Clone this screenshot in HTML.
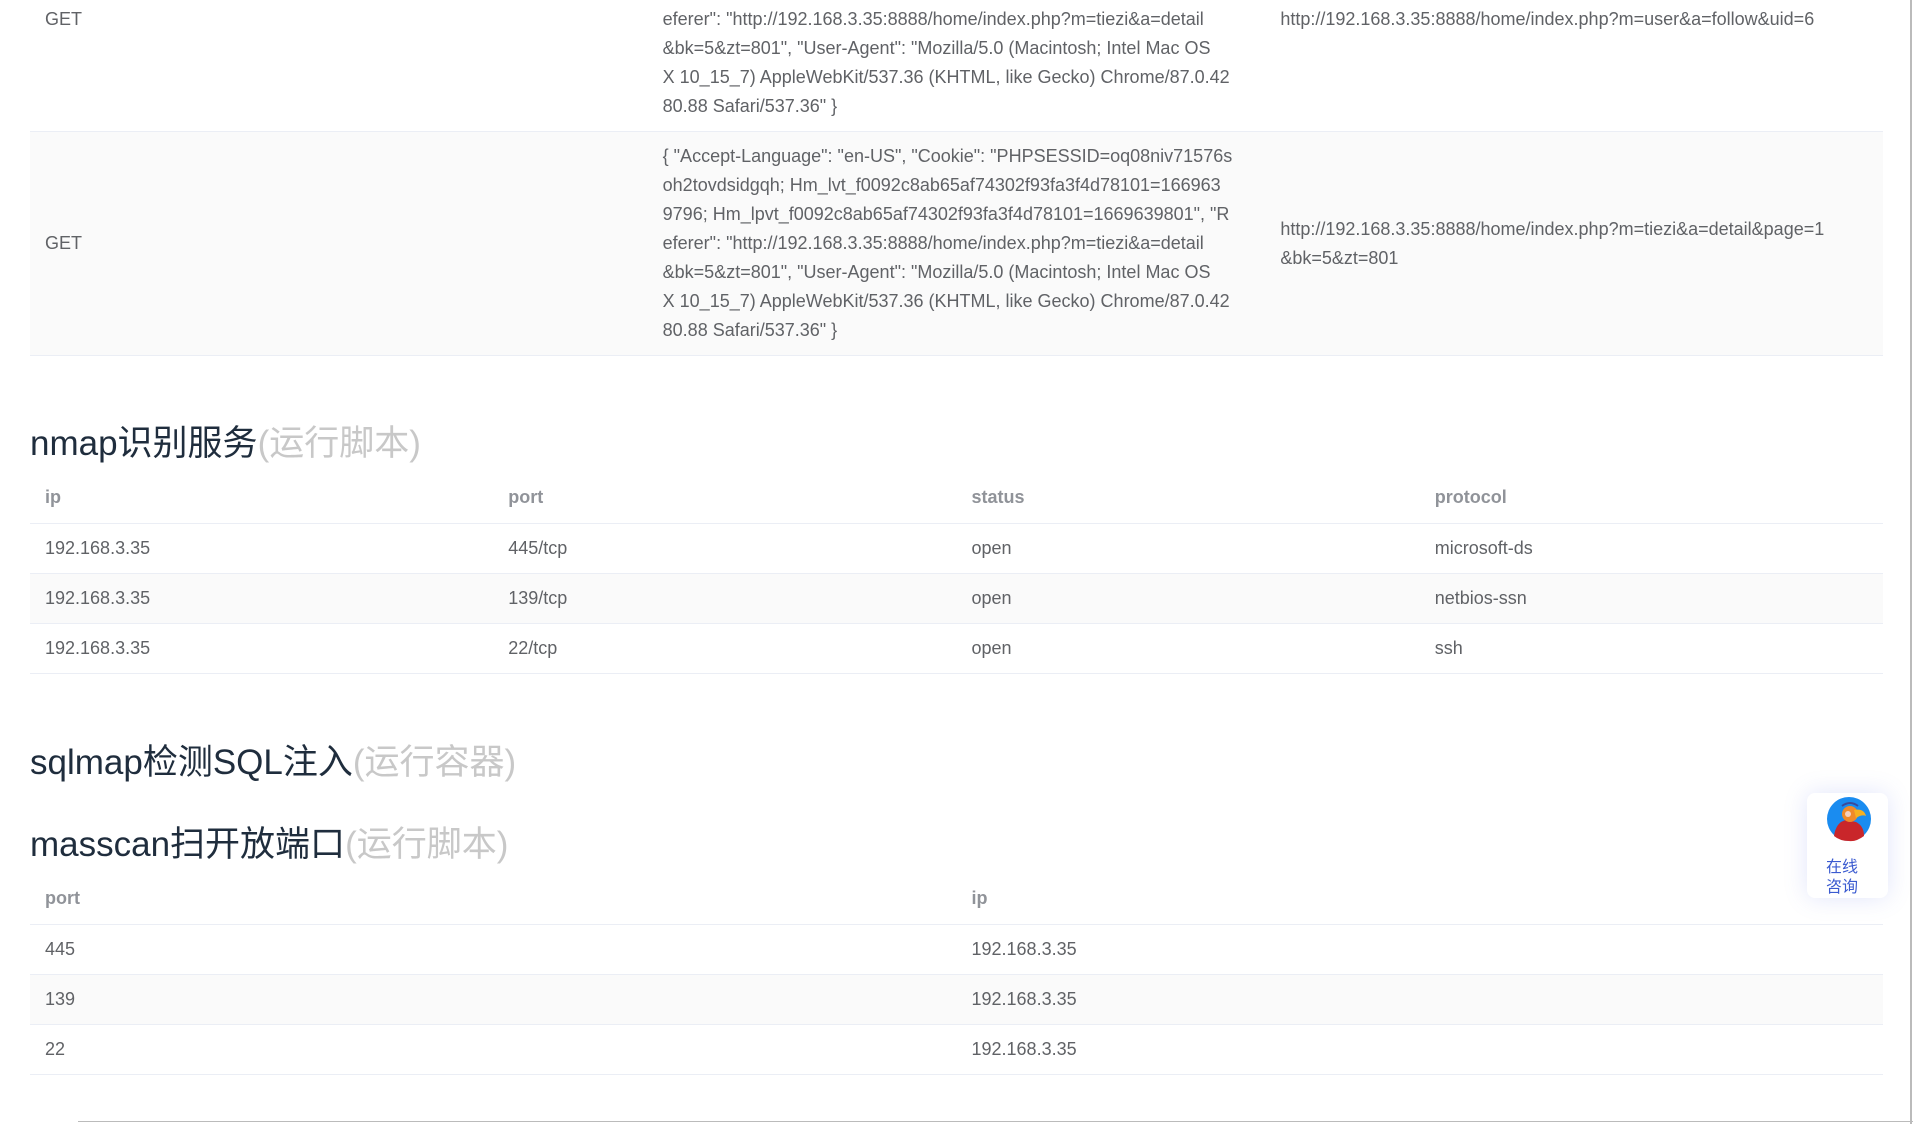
<!DOCTYPE html>
<html><head><meta charset="utf-8"><style>
*{box-sizing:border-box;margin:0;padding:0}
html,body{width:1913px;height:1124px;overflow:hidden;background:#fff;font-family:"Liberation Sans","Noto Sans CJK SC",sans-serif;color:#606266}
.abs{position:absolute}
table{border-collapse:collapse;table-layout:fixed;position:absolute;left:30px;width:1853px;font-size:18px}
td,th{border-bottom:1px solid #ebeef5;padding:0 15px;text-align:left;vertical-align:middle}
th{color:#909399;font-weight:bold;height:50px}
td{height:50px}
tr.s td{background:#fafafa}
.big td{line-height:29px;padding:10px 15px;word-break:break-all}
.big td.n{white-space:nowrap;overflow:hidden}
h2{position:absolute;left:30px;font-size:35px;font-weight:normal;color:#1f2d3d;line-height:46px;white-space:nowrap}
h2 span{color:#c8c8c8}
</style></head><body>
<table class="big" style="top:-92px">
<tr><td style="height:223px">GET</td><td class="n">{ "Accept-Language": "en-US", "Cookie": "PHPSESSID=oq08niv71576s<br>oh2tovdsidgqh; Hm_lvt_f0092c8ab65af74302f93fa3f4d78101=166963<br>9796; Hm_lpvt_f0092c8ab65af74302f93fa3f4d78101=1669639801", "R<br>eferer": "http://192.168.3.35:8888/home/index.php?m=tiezi&amp;a=detail<br>&amp;bk=5&amp;zt=801", "User-Agent": "Mozilla/5.0 (Macintosh; Intel Mac OS<br>X 10_15_7) AppleWebKit/537.36 (KHTML, like Gecko) Chrome/87.0.42<br>80.88 Safari/537.36" }</td><td>http://192.168.3.35:8888/home/index.php?m=user&amp;a=follow&amp;uid=6</td></tr>
<tr class="s"><td style="height:223px">GET</td><td class="n">{ "Accept-Language": "en-US", "Cookie": "PHPSESSID=oq08niv71576s<br>oh2tovdsidgqh; Hm_lvt_f0092c8ab65af74302f93fa3f4d78101=166963<br>9796; Hm_lpvt_f0092c8ab65af74302f93fa3f4d78101=1669639801", "R<br>eferer": "http://192.168.3.35:8888/home/index.php?m=tiezi&amp;a=detail<br>&amp;bk=5&amp;zt=801", "User-Agent": "Mozilla/5.0 (Macintosh; Intel Mac OS<br>X 10_15_7) AppleWebKit/537.36 (KHTML, like Gecko) Chrome/87.0.42<br>80.88 Safari/537.36" }</td><td class="n">http://192.168.3.35:8888/home/index.php?m=tiezi&amp;a=detail&amp;page=1<br>&amp;bk=5&amp;zt=801</td></tr>
</table>

<h2 style="top:421px">nmap识别服务<span>(运行脚本)</span></h2>
<table style="top:473px">
<tr><th>ip</th><th>port</th><th>status</th><th>protocol</th></tr>
<tr><td>192.168.3.35</td><td>445/tcp</td><td>open</td><td>microsoft-ds</td></tr>
<tr class="s"><td>192.168.3.35</td><td>139/tcp</td><td>open</td><td>netbios-ssn</td></tr>
<tr><td>192.168.3.35</td><td>22/tcp</td><td>open</td><td>ssh</td></tr>
</table>

<h2 style="top:740px">sqlmap检测SQL注入<span>(运行容器)</span></h2>
<h2 style="top:822px">masscan扫开放端口<span>(运行脚本)</span></h2>
<table style="top:874px">
<tr><th>port</th><th>ip</th></tr>
<tr><td>445</td><td>192.168.3.35</td></tr>
<tr class="s"><td>139</td><td>192.168.3.35</td></tr>
<tr><td>22</td><td>192.168.3.35</td></tr>
</table>

<div class="abs" style="left:1807px;top:793px;width:81px;height:105px;background:#fff;border-radius:8px;box-shadow:0 0 24px rgba(90,110,230,.18)">
<svg class="abs" style="left:19px;top:3px" width="46" height="46" viewBox="0 0 46 46">
<circle cx="23" cy="23" r="22" fill="#1a8cf0"/>
<path d="M8 40 Q10 26 20 24 L30 26 Q38 30 38 40 Q30 46 23 45 Q14 45 8 40Z" fill="#c9262a"/>
<circle cx="24" cy="18" r="8" fill="#f08a2a"/>
<path d="M28 14 Q38 12 40 20 Q36 18 30 22Z" fill="#f5b021"/>
<circle cx="22" cy="18" r="3" fill="#f3d0c0"/>
<path d="M16 10 Q24 4 32 10" stroke="#3a4a9a" stroke-width="2" fill="none"/>
</svg>
<div class="abs" style="left:19px;top:62px;font-size:16px;line-height:20px;color:#3b5bd0;font-family:'Noto Sans CJK SC',sans-serif">在线<br>咨询</div>
</div>

<div class="abs" style="left:1910px;top:0;width:2px;height:1124px;background:#bbb"></div>
<div class="abs" style="left:78px;top:1121px;width:1835px;height:1px;background:#bbb"></div>
</body></html>
